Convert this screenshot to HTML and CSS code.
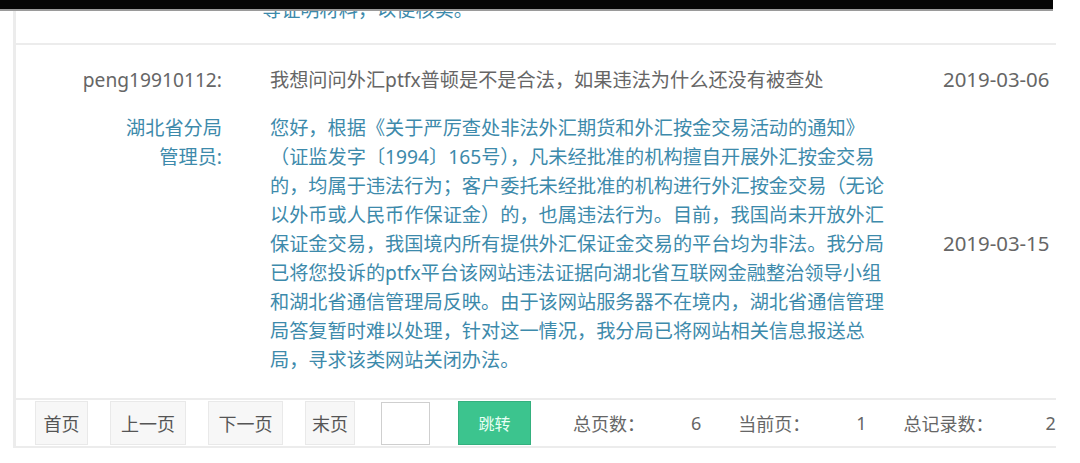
FILE: index.html
```html
<!DOCTYPE html>
<html lang="zh-CN">
<head>
<meta charset="utf-8">
<title>留言回复</title>
<link rel="stylesheet" href="styles.css">
</head>
<body>
<div class="topbar"></div>
<div class="frame">
  <div class="item item-prev">
    <div class="row">
      <div class="label"></div>
      <div class="content answer indent">等证明材料，以便核实。</div>
      <div class="date"></div>
    </div>
  </div>
  <div class="item">
    <div class="row question">
      <div class="label">peng19910112:</div>
      <div class="content">我想问问外汇ptfx普顿是不是合法，如果违法为什么还没有被查处</div>
      <div class="date">2019-03-06</div>
    </div>
    <div class="row reply">
      <div class="label answer">湖北省分局<br>管理员:</div>
      <div class="content answer">您好，根据《关于严厉查处非法外汇期货和外汇按金交易活动的通知》（证监发字〔1994〕165号），凡未经批准的机构擅自开展外汇按金交易的，均属于违法行为；客户委托未经批准的机构进行外汇按金交易（无论以外币或人民币作保证金）的，也属违法行为。目前，我国尚未开放外汇保证金交易，我国境内所有提供外汇保证金交易的平台均为非法。我分局已将您投诉的ptfx平台该网站违法证据向湖北省互联网金融整治领导小组和湖北省通信管理局反映。由于该网站服务器不在境内，湖北省通信管理局答复暂时难以处理，针对这一情况，我分局已将网站相关信息报送总局，寻求该类网站关闭办法。</div>
      <div class="date mid">2019-03-15</div>
    </div>
  </div>
  <div class="pager">
    <span class="btn w-first">首页</span>
    <span class="btn w-prev">上一页</span>
    <span class="btn w-next">下一页</span>
    <span class="btn w-last">末页</span>
    <span class="jump-input"></span>
    <span class="btn-go">跳转</span>
    <span class="info">总页数：</span>
    <span class="num">6</span>
    <span class="info">当前页：</span>
    <span class="num">1</span>
    <span class="info">总记录数：</span>
    <span class="num num-last">2</span>
  </div>
</div>
</body>
</html>
```
FILE: styles.css
```css
html, body {
  margin: 0;
  padding: 0;
  background: #fff;
}
body {
  font-family: "Noto Sans", "Noto Sans CJK SC", sans-serif;
  color: #666;
  width: 1080px;
  height: 463px;
  overflow: hidden;
}
.topbar {
  position: absolute;
  top: 0;
  left: 0;
  width: 1053px;
  height: 9px;
  background: #050505;
  border-bottom: 2px solid #9a9a9a;
  z-index: 5;
}
.frame {
  margin-left: 13px;
  width: 1040px;
  border-left: 3px solid #ececec;
  overflow: hidden;
}
.item-prev {
  margin-top: -5px;
  padding-bottom: 19px;
  border-bottom: 2px solid #ececec;
}
.row {
  display: grid;
  grid-template-columns: 206px 668px 1fr;
  font-size: 19.2px;
  line-height: 29px;
}
.label {
  text-align: right;
}
.content {
  padding-left: 48px;
  width: 620px;
}
.indent {
  text-indent: -8px;
}
.date {
  padding-left: 53px;
  font-size: 20.4px;
  white-space: nowrap;
}
.date.mid {
  align-self: center;
}
.answer {
  color: #3d8aab;
}
.question {
  padding-top: 20px;
}
.reply {
  margin-top: 19px;
  padding-bottom: 24px;
}
.pager {
  display: flex;
  align-items: center;
  height: 46px;
  padding-left: 19px;
  border-top: 2px solid #ececec;
  border-bottom: 2px solid #ececec;
  font-size: 18px;
  white-space: nowrap;
}
.pager > span {
  flex-shrink: 0;
}
.btn {
  box-sizing: border-box;
  height: 44px;
  display: flex;
  align-items: center;
  justify-content: center;
  background: #f7f7f7;
  border: 1px solid #e9e9e9;
  color: #555;
  margin-right: 22px;
}
.w-first { width: 53px; }
.w-prev { width: 76px; }
.w-next { width: 75px; }
.w-last { width: 50px; margin-right: 26px; }
.jump-input {
  box-sizing: border-box;
  width: 49px;
  height: 43px;
  background: #fff;
  border: 1px solid #cfcfcf;
  margin-right: 28px;
}
.btn-go {
  box-sizing: border-box;
  width: 73px;
  height: 44px;
  display: flex;
  align-items: center;
  justify-content: center;
  background: #3cc48e;
  border: 1px solid #34b07e;
  color: #e8fff4;
  font-size: 16px;
  margin-right: 42px;
}
.info {
  color: #666;
}
.num {
  color: #666;
  margin-left: 46px;
  margin-right: 37px;
}
.num-last {
  margin-left: 52px;
}
```
